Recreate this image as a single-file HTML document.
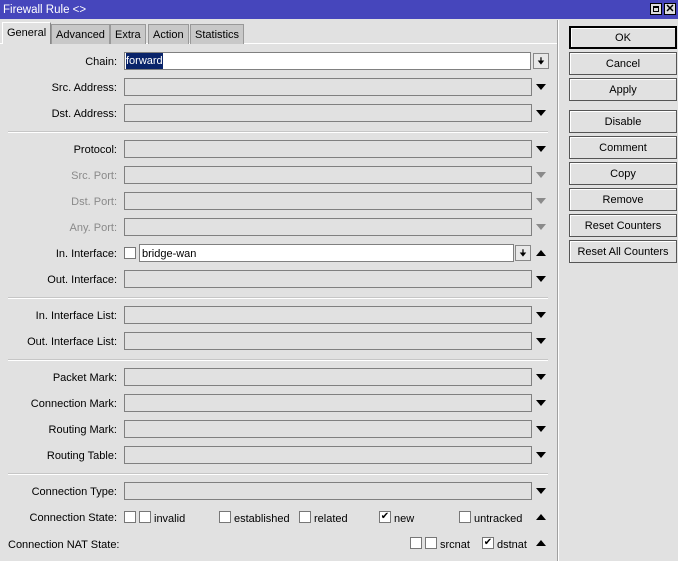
<!DOCTYPE html>
<html><head><style>
*{box-sizing:border-box;margin:0;padding:0}
body{width:678px;height:561px;background:#e1e1e1;font-family:"Liberation Sans",sans-serif;font-size:11px;color:#000;position:relative;overflow:hidden}
.a{position:absolute}
.title{left:0;top:0;width:678px;height:19px;background:#4646bc;color:#fff;font-size:11.5px;line-height:21px;padding-left:3px}
.lbl{right:561px;text-align:right;white-space:nowrap;line-height:20px}
.dis{color:#8a8a8a}
.f{left:124px;width:408px;height:18px;border:1px solid #808080;background:#e1e1e1}
.ar{left:536px;width:0;height:0;border-left:5px solid transparent;border-right:5px solid transparent}
.dn{border-top:6px solid #000}
.dn.g{border-top-color:#8a8a8a}
.up{border-bottom:6px solid #000}
.sep{left:8px;width:540px;height:2px;border-top:1px solid #c6c6c6;border-bottom:1px solid #fff}
.btn{left:569px;width:108px;height:23px;border:1px solid #555;background:#e1e1e1;text-align:center;line-height:23px;box-shadow:inset 1px 1px 0 #fff}
.cb{width:12px;height:12px;border:1px solid #777;background:#fff}
.t{line-height:16px}
.tab{top:24px;height:20px;border:1px solid #999;border-bottom:none;background:#c8c8c8;line-height:21px;padding:0 4px}
</style></head><body>
<div class="a title">Firewall Rule &lt;&gt;</div>
<div class="a" style="left:650px;top:3px;width:12px;height:12px;background:#ddd;border:1px solid #000"><div style="margin:2px;width:6px;height:6px;border:1px solid #000;border-top-width:2px"></div></div>
<div class="a" style="left:664px;top:3px;width:12px;height:12px;background:#ddd;border:1px solid #000;font-size:11px;font-weight:bold;line-height:10px;text-align:center">✕</div>
<div class="a" style="left:0;top:43px;width:558px;height:1px;background:#fff"></div>
<div class="a tab" style="left:51px">Advanced</div>
<div class="a tab" style="left:110px">Extra</div>
<div class="a tab" style="left:148px">Action</div>
<div class="a tab" style="left:190px">Statistics</div>
<div class="a tab" style="left:2px;top:22px;height:22px;background:#e1e1e1;border-color:#fff #888 #e1e1e1 #fff">General</div>
<div class="a" style="left:557px;top:20px;width:1px;height:541px;background:#a0a0a0"></div>
<div class="a" style="left:558px;top:20px;width:1px;height:541px;background:#fff"></div>

<div class="a lbl" style="top:52px">Chain:</div>
<div class="a f" style="top:52px;width:407px;background:#fff"><span style="background:#0a246a;color:#fff;margin-left:1px;line-height:16px;display:inline-block">forward</span></div>
<div class="a" style="left:533px;top:53px;width:16px;height:16px;border:1px solid #888;background:#e8e8e8;text-align:center;font-size:9px;line-height:14px">🠋</div>

<div class="a lbl" style="top:78px">Src. Address:</div><div class="a f" style="top:78px"></div><div class="a ar dn" style="top:84px"></div>
<div class="a lbl" style="top:104px">Dst. Address:</div><div class="a f" style="top:104px"></div><div class="a ar dn" style="top:110px"></div>
<div class="a sep" style="top:131px"></div>
<div class="a lbl" style="top:140px">Protocol:</div><div class="a f" style="top:140px"></div><div class="a ar dn" style="top:146px"></div>
<div class="a lbl dis" style="top:166px">Src. Port:</div><div class="a f" style="top:166px"></div><div class="a ar dn g" style="top:172px"></div>
<div class="a lbl dis" style="top:192px">Dst. Port:</div><div class="a f" style="top:192px"></div><div class="a ar dn g" style="top:198px"></div>
<div class="a lbl dis" style="top:218px">Any. Port:</div><div class="a f" style="top:218px"></div><div class="a ar dn g" style="top:224px"></div>
<div class="a lbl" style="top:244px">In. Interface:</div>
<div class="a cb" style="left:124px;top:247px"></div>
<div class="a f" style="left:139px;top:244px;width:375px;background:#fff;padding-left:2px;line-height:18px">bridge-wan</div>
<div class="a" style="left:515px;top:245px;width:16px;height:16px;border:1px solid #888;background:#e8e8e8;text-align:center;font-size:9px;line-height:14px">🠋</div>
<div class="a ar up" style="top:250px"></div>
<div class="a lbl" style="top:270px">Out. Interface:</div><div class="a f" style="top:270px"></div><div class="a ar dn" style="top:276px"></div>
<div class="a sep" style="top:297px"></div>
<div class="a lbl" style="top:306px">In. Interface List:</div><div class="a f" style="top:306px"></div><div class="a ar dn" style="top:312px"></div>
<div class="a lbl" style="top:332px">Out. Interface List:</div><div class="a f" style="top:332px"></div><div class="a ar dn" style="top:338px"></div>
<div class="a sep" style="top:359px"></div>
<div class="a lbl" style="top:368px">Packet Mark:</div><div class="a f" style="top:368px"></div><div class="a ar dn" style="top:374px"></div>
<div class="a lbl" style="top:394px">Connection Mark:</div><div class="a f" style="top:394px"></div><div class="a ar dn" style="top:400px"></div>
<div class="a lbl" style="top:420px">Routing Mark:</div><div class="a f" style="top:420px"></div><div class="a ar dn" style="top:426px"></div>
<div class="a lbl" style="top:446px">Routing Table:</div><div class="a f" style="top:446px"></div><div class="a ar dn" style="top:452px"></div>
<div class="a sep" style="top:473px"></div>
<div class="a lbl" style="top:482px">Connection Type:</div><div class="a f" style="top:482px"></div><div class="a ar dn" style="top:488px"></div>
<div class="a lbl" style="top:508px">Connection State:</div>
<div class="a cb" style="left:124px;top:511px"></div><div class="a cb" style="left:139px;top:511px"></div><div class="a t" style="left:154px;top:511px">invalid</div>
<div class="a cb" style="left:219px;top:511px"></div><div class="a t" style="left:234px;top:511px">established</div>
<div class="a cb" style="left:299px;top:511px"></div><div class="a t" style="left:314px;top:511px">related</div>
<div class="a cb" style="left:379px;top:511px;font-size:10px;line-height:10px;text-align:center">✔</div><div class="a t" style="left:394px;top:511px">new</div>
<div class="a cb" style="left:459px;top:511px"></div><div class="a t" style="left:474px;top:511px">untracked</div>
<div class="a ar up" style="top:514px"></div>
<div class="a lbl" style="top:535px;left:8px;right:auto">Connection NAT State:</div>
<div class="a cb" style="left:410px;top:537px"></div><div class="a cb" style="left:425px;top:537px"></div><div class="a t" style="left:440px;top:537px">srcnat</div>
<div class="a cb" style="left:482px;top:537px;font-size:10px;line-height:10px;text-align:center">✔</div><div class="a t" style="left:497px;top:537px">dstnat</div>
<div class="a ar up" style="top:540px"></div>

<div class="a btn" style="top:26px;border:2px solid #000;line-height:21px">OK</div>
<div class="a btn" style="top:52px">Cancel</div>
<div class="a btn" style="top:78px">Apply</div>
<div class="a btn" style="top:110px">Disable</div>
<div class="a btn" style="top:136px">Comment</div>
<div class="a btn" style="top:162px">Copy</div>
<div class="a btn" style="top:188px">Remove</div>
<div class="a btn" style="top:214px">Reset Counters</div>
<div class="a btn" style="top:240px">Reset All Counters</div>
</body></html>
